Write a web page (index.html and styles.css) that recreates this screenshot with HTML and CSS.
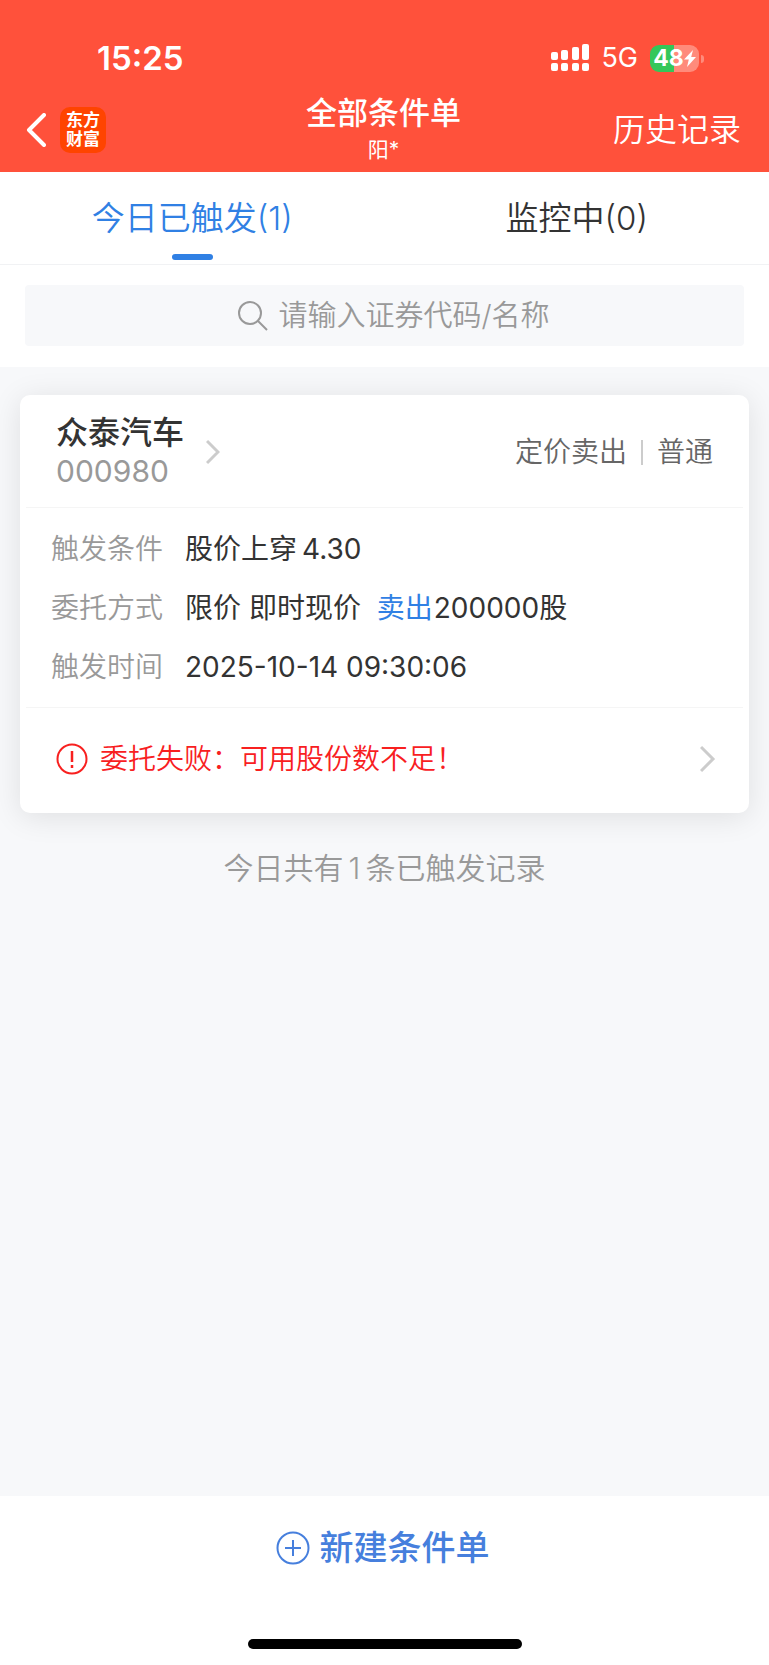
FILE: index.html
```html
<!DOCTYPE html>
<html lang="zh-CN">

<head>
    <meta charset="UTF-8">
    <meta name="viewport" content="width=device-width, initial-scale=1.0">
    <title>全部条件单</title>
    <link rel="stylesheet" href="styles.css">
</head>

<body>
    <header>
        <div class="status-bar">
            <span class="time">15:25</span>
            <div class="status-icons">
                <svg class="signal" width="38" height="28" viewBox="0 0 38 28" fill="#fff">
                    <rect x="0" y="8" width="7" height="8" rx="2"/>
                    <rect x="10" y="6" width="7" height="10" rx="2"/>
                    <rect x="21" y="3" width="7" height="13" rx="2"/>
                    <rect x="31" y="0" width="7" height="16" rx="2"/>
                    <rect x="0" y="19" width="7" height="8" rx="2"/>
                    <rect x="10" y="19" width="7" height="8" rx="2"/>
                    <rect x="21" y="19" width="7" height="8" rx="2"/>
                    <rect x="31" y="19" width="7" height="8" rx="2"/>
                </svg>
                <span class="network">5G</span>
                <div class="battery">
                    <span>48</span>
                    <svg width="12" height="17" viewBox="0 0 12 17" fill="#fff">
                        <path d="M9 0 0 9.500h4.800L3 17l9-10H7.200z"/>
                    </svg>
                </div>
            </div>
        </div>
        <div class="nav-bar">
            <div class="nav-left">
                <a href="#" class="back" aria-label="返回">
                    <svg width="20" height="34" viewBox="0 0 20 34" fill="none" stroke="#fff" stroke-width="4" stroke-linecap="round" stroke-linejoin="round">
                        <path d="M18 2 3 17l15 15"/>
                    </svg>
                </a>
                <div class="logo">东方<br>财富</div>
            </div>
            <div class="nav-title">
                <h1>全部条件单</h1>
                <p>阳*</p>
            </div>
            <a href="#" class="history">历史记录</a>
        </div>
    </header>

    <nav class="tabs">
        <a href="#" class="tab active">今日已触发(1)</a>
        <a href="#" class="tab">监控中(0)</a>
    </nav>

    <div class="search">
        <label class="search-box">
            <svg width="30" height="30" viewBox="0 0 30 30" fill="none" stroke="#999" stroke-width="2">
                <circle cx="12" cy="12" r="11"/>
                <path d="M20 20l9 9"/>
            </svg>
            <input type="text" placeholder="请输入证券代码/名称" aria-label="请输入证券代码/名称">
        </label>
    </div>

    <main>
        <section class="card">
            <div class="card-header">
                <a href="#" class="stock">
                    <div>
                        <h2>众泰汽车</h2>
                        <p>000980</p>
                    </div>
                    <svg width="14" height="26" viewBox="0 0 14 26" fill="none" stroke="#ccc" stroke-width="3">
                        <path d="M1 2l11 11L1 24"/>
                    </svg>
                </a>
                <div class="order-type">
                    <span>定价卖出</span>
                    <i class="separator"></i>
                    <span>普通</span>
                </div>
            </div>
            <dl class="card-body">
                <dt>触发条件</dt>
                <dd>股价上穿<span class="num">4.30</span></dd>
                <dt>委托方式</dt>
                <dd>限价 即时现价 <span class="sell">卖出</span>200000股</dd>
                <dt>触发时间</dt>
                <dd>2025-10-14 09:30:06</dd>
            </dl>
            <a href="#" class="card-footer">
                <svg width="32" height="32" viewBox="0 0 32 32" fill="none" stroke="#f8201f" stroke-width="2">
                    <circle cx="16" cy="16" r="14.500"/>
                    <path d="M16 8v11M16 22v3" stroke-width="2.500"/>
                </svg>
                <span class="error">委托失败：可用股份数不足！</span>
                <svg width="16" height="28" viewBox="0 0 16 28" fill="none" stroke="#ccc" stroke-width="3">
                    <path d="M1 2l12 12L1 26"/>
                </svg>
            </a>
        </section>
        <p class="summary">今日共有<span class="num">1</span>条已触发记录</p>
    </main>

    <footer>
        <button type="button" class="create">
            <svg width="34" height="34" viewBox="0 0 34 34" fill="none" stroke="#467fdd" stroke-width="2">
                <circle cx="17" cy="17" r="15.500"/>
                <path d="M9 17h16M17 9v16"/>
            </svg>
            新建条件单
        </button>
        <div class="home-indicator"></div>
    </footer>
</body>

</html>
```

FILE: styles.css
```css
* {
    margin: 0;
    padding: 0;
    box-sizing: border-box;
}
body {
    font-family: Inter, "Noto Sans CJK SC", sans-serif;
    font-size: 28px;
    font-weight: 350;
    line-height: 40px;
    color: #333;
    background-color: #f7f8fa;
    min-height: 100vh;
    display: flex;
    flex-direction: column;
}
a {
    color: inherit;
    text-decoration: none;
}
svg {
    display: block;
    flex-shrink: 0;
}
header {
    background-color: #ff513b;
    color: white;
}
.status-bar {
    display: flex;
    justify-content: space-between;
    align-items: center;
    height: 86px;
    padding: 30px 65px 0 97px;
}
.time {
    font-size: 33px;
    font-weight: 600;
}
.status-icons {
    display: flex;
    align-items: center;
}
.network {
    margin: 0 12px;
    font-size: 27px;
    font-weight: 400;
}
.battery {
    position: relative;
    display: flex;
    align-items: center;
    justify-content: center;
    width: 49px;
    height: 27px;
    margin-right: 5px;
    border-radius: 9px;
    background: linear-gradient(to right, #34c759 24px, #ff8b7b 24px);
    font-size: 23px;
    font-weight: 700;
}
.battery::after {
    content: "";
    position: absolute;
    right: -5px;
    top: 10px;
    width: 3px;
    height: 8px;
    border-radius: 0 4px 4px 0;
    background-color: #ff8b7b;
}
.nav-bar {
    display: grid;
    grid-template-columns: 1fr auto 1fr;
    align-items: center;
    height: 86px;
    padding: 2px 28px 0 26px;
}
.nav-left {
    display: flex;
    align-items: center;
    gap: 14px;
}
.logo {
    width: 46px;
    height: 46px;
    padding-top: 4px;
    border-radius: 10px;
    background-color: #ff4400;
    font-size: 17px;
    font-weight: 700;
    line-height: 19px;
    text-align: center;
}
.nav-title {
    text-align: center;
}
.nav-title h1 {
    font-size: 31px;
    font-weight: 500;
    line-height: 40px;
}
.nav-title p {
    font-size: 21px;
    font-weight: 400;
    line-height: 34px;
}
.history {
    justify-self: end;
    font-size: 32px;
}
.tabs {
    display: flex;
    height: 93px;
    background-color: white;
    border-bottom: 1px solid #f1f2f4;
}
.tab {
    flex: 1;
    position: relative;
    padding-top: 1px;
    font-size: 33px;
    line-height: 90px;
    text-align: center;
}
.tab.active {
    color: #3080e4;
}
.tab.active::after {
    content: "";
    position: absolute;
    left: 50%;
    bottom: 4px;
    width: 41px;
    height: 6px;
    margin-left: -20px;
    border-radius: 3px;
    background-color: #3080e4;
}
.search {
    padding: 20px 25px 21px;
    background-color: white;
}
.search-box {
    display: flex;
    justify-content: center;
    align-items: center;
    gap: 11px;
    height: 61px;
    padding-left: 21px;
    border-radius: 4px;
    background-color: #f7f8fa;
}
.search-box input {
    width: 274px;
    border: none;
    outline: none;
    background: none;
    font: inherit;
    font-size: 29px;
}
.search-box input::placeholder {
    color: #999;
}
main {
    flex: 1;
    padding: 28px 20px;
}
.card {
    padding: 0 6px;
    border-radius: 10px;
    background-color: white;
    box-shadow: 0 4px 30px rgba(0, 0, 0, 0.1);
}
.card-header {
    display: flex;
    justify-content: space-between;
    align-items: center;
    height: 113px;
    padding: 2px 30px 0;
    border-bottom: 1px solid #f5f5f5;
}
.stock {
    display: flex;
    align-items: center;
    gap: 22px;
}
.stock h2 {
    font-size: 32px;
    font-weight: 500;
    line-height: 38px;
}
.stock p {
    color: #999;
    font-size: 30px;
    font-weight: 400;
    line-height: 38px;
}
.order-type {
    display: flex;
    align-items: center;
    gap: 14px;
    color: #666;
}
.separator {
    width: 2px;
    height: 25px;
    background-color: #ccc;
}
.card-body {
    display: grid;
    grid-template-columns: 112px 1fr;
    column-gap: 22px;
    padding: 12px 25px 10px;
    line-height: 59px;
    border-bottom: 1px solid #f5f5f5;
}
.card-body dt {
    color: #999;
}
.card-body dd {
    font-weight: 400;
}
.num {
    margin: 0 5px;
}
.sell {
    margin: 0 1px 0 8px;
    color: #3080e4;
}
.card-footer {
    display: flex;
    align-items: center;
    gap: 12px;
    height: 105px;
    padding: 0 27px 4px 30px;
}
.error {
    flex: 1;
    color: #f8201f;
}
.summary {
    margin-top: 35px;
    color: #999;
    font-size: 30px;
    text-align: center;
}
footer {
    display: flex;
    flex-direction: column;
    align-items: center;
    height: 169px;
    padding: 28px 0 16px;
    background-color: white;
}
.create {
    display: flex;
    align-items: center;
    gap: 10px;
    padding-right: 4px;
    border: none;
    background: none;
    color: #467fdd;
    font: inherit;
    font-size: 34px;
    font-weight: 500;
    line-height: 48px;
    cursor: pointer;
}
.home-indicator {
    width: 274px;
    height: 10px;
    margin-top: auto;
    border-radius: 5px;
    background-color: black;
}
```
